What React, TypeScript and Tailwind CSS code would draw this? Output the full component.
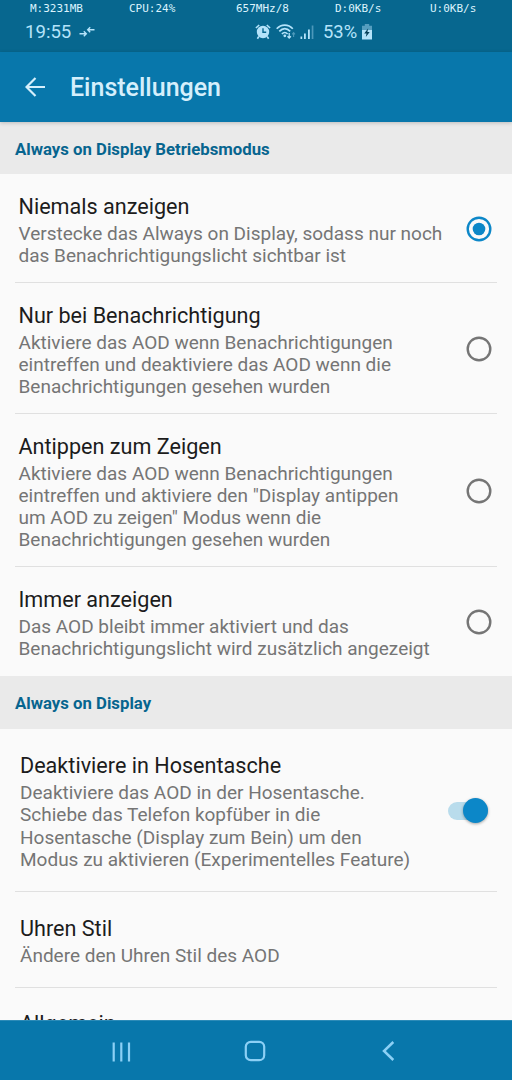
import { clsx } from 'clsx';

interface RowProps {
  title: string;
  lines: string[];
  control?: React.ReactNode;
  className?: string;
  last?: boolean;
}

const stats = [
  { label: 'M:3231MB', width: 'w-[99px]' },
  { label: 'CPU:24%', width: 'w-[107px]' },
  { label: '657MHz/8', width: 'w-[99px]' },
  { label: 'D:0KB/s', width: 'w-[95px]' },
  { label: 'U:0KB/s', width: 'w-[60px]' },
];

const modes = [
  {
    title: 'Niemals anzeigen',
    lines: ['Verstecke das Always on Display, sodass nur noch', 'das Benachrichtigungslicht sichtbar ist'],
    height: 'h-[109px]',
  },
  {
    title: 'Nur bei Benachrichtigung',
    lines: [
      'Aktiviere das AOD wenn Benachrichtigungen',
      'eintreffen und deaktiviere das AOD wenn die',
      'Benachrichtigungen gesehen wurden',
    ],
    height: 'h-[131px]',
  },
  {
    title: 'Antippen zum Zeigen',
    lines: [
      'Aktiviere das AOD wenn Benachrichtigungen',
      'eintreffen und aktiviere den "Display antippen',
      'um AOD zu zeigen" Modus wenn die',
      'Benachrichtigungen gesehen wurden',
    ],
    height: 'h-[153px]',
  },
  {
    title: 'Immer anzeigen',
    lines: ['Das AOD bleibt immer aktiviert und das', 'Benachrichtigungslicht wird zusätzlich angezeigt'],
    height: 'h-[109px]',
  },
];

function StatusBar() {
  return (
    <div className="h-[52px] shrink-0 bg-[#07678f] text-[#b5e3fa]">
      <div className="flex h-4 pt-px pl-[30px] font-['DejaVu_Sans_Mono',monospace] text-[11px] leading-4 text-[#dcf3fd]">
        {stats.map((stat) => (
          <span key={stat.label} className={clsx('shrink-0 whitespace-nowrap', stat.width)}>
            {stat.label}
          </span>
        ))}
      </div>
      <div className="flex h-8 items-center pl-[25px]">
        <span className="w-[54px] text-[18.6px] leading-8">19:55</span>
        <svg className="h-[14px] w-4" viewBox="0 0 16 14" fill="none" stroke="currentColor" strokeWidth="1.4">
          <path d="M0.5 8.8H7M4.8 6.3L7.3 8.8L4.8 11.3M15.5 4.8H9M11.2 2.3L8.7 4.8L11.2 7.3" />
        </svg>
        <svg className="ml-[160px] h-4 w-4" viewBox="0 0 16 16" fill="none" stroke="currentColor">
          <circle cx="8" cy="8" r="6.2" fill="currentColor" stroke="none" />
          <path d="M0.9 4L4.2 1M15.1 4L11.8 1M3.8 12.5L2.4 14.7M12.2 12.5L13.6 14.7" strokeWidth="1.6" />
          <path d="M8 4.3V8.3H11.2" stroke="#07678f" strokeWidth="1.4" />
        </svg>
        <svg className="ml-[5px] h-4 w-5" viewBox="0 0 20 16" fill="none" stroke="currentColor">
          <path d="M0.7 4.7C5.2 -0.2 12.3 -0.2 16.8 4.7M3.3 7.4C6.8 3.7 10.8 3.7 14.2 7.4M5.9 10C7.8 8 9.8 8 11.6 10" strokeWidth="1.7" />
          <circle cx="8.8" cy="11.8" r="1.4" fill="currentColor" stroke="none" />
          <path d="M13.2 9V14M11.5 12.3L13.2 14.1L14.9 12.3" strokeWidth="1.3" />
          <path d="M17.6 13V8.7M16.2 10.3L17.6 8.7L19 10.3" strokeWidth="1.1" opacity="0.4" />
        </svg>
        <svg className="mb-px ml-1 h-[14px] w-[14px]" viewBox="0 0 14 14" fill="currentColor">
          <path d="M0.5 11.5H2.2V14H0.5zM4 8.5H5.8V14H4zM8 4.5H9.8V14H8z" />
          <path d="M11.7 0.5H13.4V14H11.7z" opacity="0.4" />
        </svg>
        <span className="ml-[9px] w-[38px] text-[18.4px] leading-8">53%</span>
        <svg className="h-4 w-3" viewBox="0 0 12 16" fill="currentColor">
          <path d="M3.8 0H8.2V1.7H11V6H1V1.7H3.8z" opacity="0.45" />
          <path d="M1 6H11V15.5H1z" />
          <path d="M7.2 4.2L3.2 9.5H5.5L4.8 13L8.7 8H6.4z" fill="#07405a" />
        </svg>
      </div>
    </div>
  );
}

function SectionHeader({ children, className }: { children: string; className?: string }) {
  return (
    <h2 className={clsx('shrink-0 bg-[#eaeaea] pl-[15px] text-[16.75px] font-bold text-[#07658f]', className)}>
      {children}
    </h2>
  );
}

function Radio({ checked }: { checked: boolean }) {
  return (
    <svg className={clsx('size-[26px]', checked ? 'text-[#0c87c8]' : 'text-[#757575]')} viewBox="0 0 26 26">
      <circle cx="13" cy="13" r="11.3" fill="none" stroke="currentColor" strokeWidth="2.4" />
      {checked && <circle cx="13" cy="13" r="6.3" fill="currentColor" />}
    </svg>
  );
}

function Switch() {
  return (
    <span className="flex h-[18px] w-[40px] items-center justify-end rounded-full bg-[#b9dcec]">
      <span className="size-[25px] shrink-0 rounded-full bg-[#0c87c8] shadow-[0_1px_3px_rgba(0,0,0,0.35)]" />
    </span>
  );
}

function Row({ title, lines, control, className, last }: RowProps) {
  return (
    <div className={clsx('relative flex shrink-0 items-center justify-between', className)}>
      <div className="self-start">
        <h3 className="text-[21.6px] leading-[26px] whitespace-nowrap text-[#1c1c1c]">{title}</h3>
        <p className="mt-[3px] text-[19px] leading-[22.3px] text-[#757575]">
          {lines.map((line) => (
            <span key={line} className="block whitespace-nowrap">
              {line}
            </span>
          ))}
        </p>
      </div>
      {control}
      {!last && <div className="absolute right-[15px] bottom-0 left-[15px] h-px bg-[#e0e0e0]" />}
    </div>
  );
}

function NavigationBar() {
  return (
    <nav className="flex h-[60px] shrink-0 items-center border-t border-[#2c8bb8] bg-[#0877ab] pl-[111px] text-[#8cd0f5]">
      <svg className="mt-[2px] h-5 w-5" viewBox="0 0 20 20" fill="none" stroke="currentColor" strokeWidth="2.2">
        <path d="M2.7 0.5V19.5M10.3 0.5V19.5M18 0.5V19.5" />
      </svg>
      <svg className="mt-px ml-[113px] h-[22px] w-[22px]" viewBox="0 0 22 22" fill="none" stroke="currentColor" strokeWidth="2.2">
        <rect x="1.8" y="1.8" width="18.4" height="18.4" rx="5" />
      </svg>
      <svg className="mt-px ml-[116px] h-5 w-[13px]" viewBox="0 0 13 20" fill="none" stroke="currentColor" strokeWidth="2.5">
        <path d="M11.3 1L2 10L11.3 19" />
      </svg>
    </nav>
  );
}

export default function App() {
  return (
    <div className="flex h-[1080px] w-[512px] flex-col overflow-hidden bg-[#fafafa] font-[Roboto,sans-serif]">
      <StatusBar />
      <header className="relative flex h-[70px] shrink-0 items-center bg-[#0877ab] pl-[25px] text-[#d5effc] shadow-[0_1px_4px_rgba(0,0,0,0.2)]">
        <svg className="h-5 w-5" viewBox="0 0 20 20" fill="none" stroke="currentColor" strokeWidth="2.2">
          <path d="M20 10H1.8M10.5 1L1.5 10L10.5 19" />
        </svg>
        <h1 className="mt-[2px] ml-[25px] text-[25px] leading-8 font-medium">Einstellungen</h1>
      </header>
      <main className="flex min-h-0 flex-1 flex-col overflow-hidden">
        <SectionHeader className="h-[52px] leading-[54px]">Always on Display Betriebsmodus</SectionHeader>
        {modes.map((mode, index) => (
          <Row
            key={mode.title}
            title={mode.title}
            lines={mode.lines}
            className={clsx('pt-[19.5px] pr-[20px] pl-[18.5px]', mode.height)}
            last={index === modes.length - 1}
            control={
              <div className="-mt-[19px]">
                <Radio checked={index === 0} />
              </div>
            }
          />
        ))}
        <SectionHeader className="h-[53px] leading-[54px]">Always on Display</SectionHeader>
        <Row
          title="Deaktiviere in Hosentasche"
          lines={[
            'Deaktiviere das AOD in der Hosentasche.',
            'Schiebe das Telefon kopfüber in die',
            'Hosentasche (Display zum Bein) um den',
            'Modus zu aktivieren (Experimentelles Feature)',
          ]}
          className="h-[163px] pt-[24px] pr-[24px] pl-[20px]"
          control={
            <div className="-mt-[24px]">
              <Switch />
            </div>
          }
        />
        <Row title="Uhren Stil" lines={['Ändere den Uhren Stil des AOD']} className="h-[96px] pt-[23.5px] pl-[20px]" />
        <Row title="Allgemein" lines={[]} className="h-[96px] pt-[23px] pl-[20px]" last />
      </main>
      <NavigationBar />
    </div>
  );
}
